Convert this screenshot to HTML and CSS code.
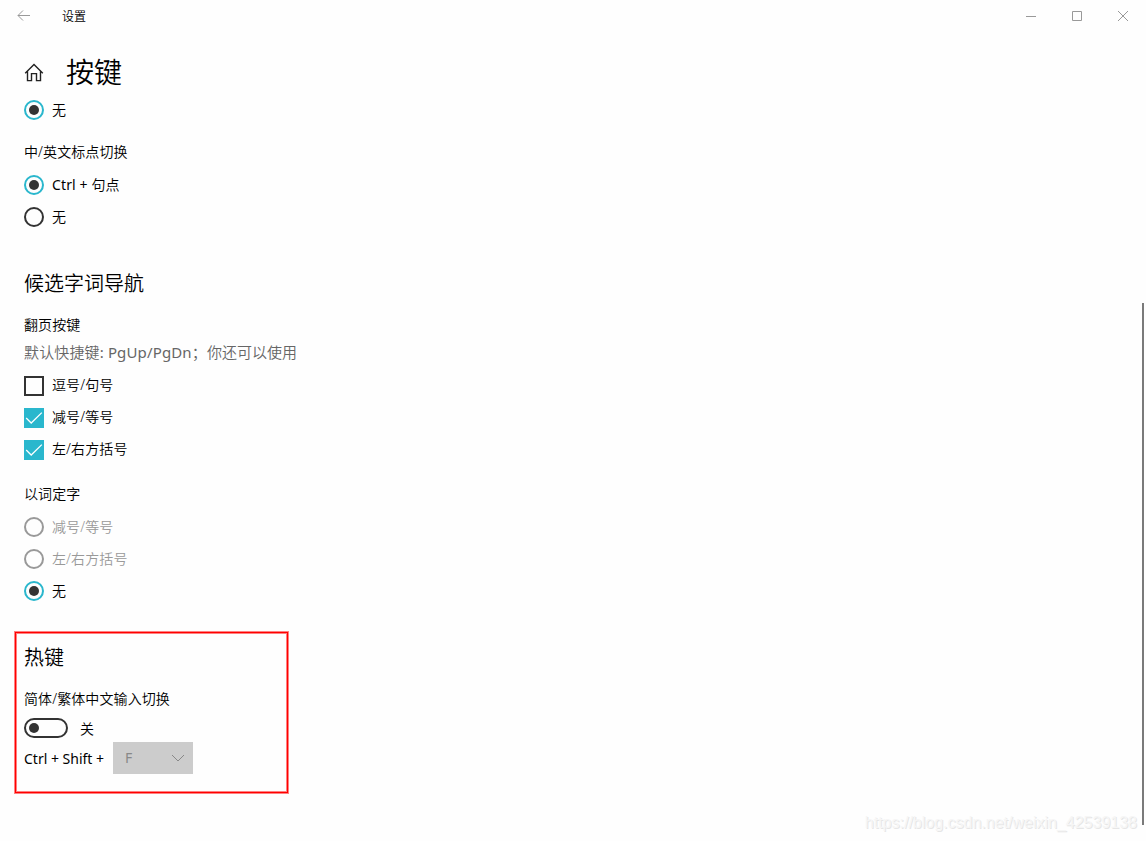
FILE: index.html
```html
<!DOCTYPE html>
<html lang="zh-CN">
<head>
  <meta charset="UTF-8">
  <title>设置</title>
  <link rel="stylesheet" href="styles.css">
</head>
<body>

  <div class="titlebar">
    <svg class="back" width="14" height="12" viewBox="0 0 14 12"><path d="M13 5.500H1M6 .5l-5 5 5 5"/></svg>
    <span class="app-name">设置</span>
    <div class="window-buttons">
      <svg width="46" height="32" viewBox="0 0 46 32"><path d="M18 16.5h10"/></svg>
      <svg width="46" height="32" viewBox="0 0 46 32"><path d="M18.5 11.5h9v9h-9z"/></svg>
      <svg width="46" height="32" viewBox="0 0 46 32"><path d="M18 11l10 10M28 11L18 21"/></svg>
    </div>
  </div>

  <div class="content">
    <div class="page-title">
      <svg class="home" width="20" height="20" viewBox="0 0 20 20"><path d="M1.200 11.200L10 2.500l8.800 8.700M3.500 9.500v9.100h4v-7h5v7h4V9.500"/></svg>
      <h1>按键</h1>
    </div>

    <div class="option"><span class="radio checked"></span><span class="text">无</span></div>

    <h3 class="punctuation">中/英文标点切换</h3>
    <div class="option"><span class="radio checked"></span><span class="text"><span class="latin">Ctrl + </span>句点</span></div>
    <div class="option"><span class="radio"></span><span class="text">无</span></div>

    <h2 class="navigation">候选字词导航</h2>
    <h3>翻页按键</h3>
    <p class="hint"><span class="default-keys">默认快捷键<span class="latin">: PgUp/PgDn</span>；</span><span>你还可以使用</span></p>
    <div class="checks">
      <div class="option"><span class="checkbox"></span><span class="text">逗号/句号</span></div>
      <div class="option">
        <span class="checkbox checked"><svg width="20" height="20" viewBox="0 0 20 20"><path d="M2.200 10l5 5L17.800 4.600"/></svg></span>
        <span class="text">减号/等号</span>
      </div>
      <div class="option">
        <span class="checkbox checked"><svg width="20" height="20" viewBox="0 0 20 20"><path d="M2.200 10l5 5L17.800 4.600"/></svg></span>
        <span class="text">左/右方括号</span>
      </div>
    </div>

    <h3 class="word-pick">以词定字</h3>
    <div class="option disabled"><span class="radio"></span><span class="text">减号/等号</span></div>
    <div class="option disabled"><span class="radio"></span><span class="text">左/右方括号</span></div>
    <div class="option"><span class="radio checked"></span><span class="text">无</span></div>

    <div class="hotkeys">
      <h2>热键</h2>
      <h3>简体/繁体中文输入切换</h3>
      <div class="toggle-row"><span class="toggle"></span><span class="state">关</span></div>
      <div class="shortcut latin">
        <span class="keys">Ctrl + Shift +</span>
        <div class="select">
          <span>F</span>
          <svg width="14" height="8" viewBox="0 0 14 8"><path d="M1 1l6 6 6-6"/></svg>
        </div>
      </div>
    </div>
  </div>

  <div class="scrollbar"></div>
  <div class="watermark">https://blog.csdn.net/weixin_42539138</div>

</body>
</html>
```

FILE: styles.css
```css
* { box-sizing: border-box; }
body {
  margin: 0;
  height: 841px;
  position: relative;
  overflow: hidden;
  background: #fefefe;
  color: #000;
  font: 350 14px/20px "Noto Sans", "Noto Sans CJK SC", sans-serif;
}
svg { display: block; fill: none; }
h1, h2, h3, p { margin: 0; font-weight: 350; }
.latin { font-weight: 400; }

.titlebar {
  display: flex;
  align-items: center;
  height: 32px;
  padding-left: 17px;
}
.back { stroke: #999; }
.app-name { margin-left: 31px; padding-top: 2px; font-size: 12px; }
.window-buttons { display: flex; margin-left: auto; }
.window-buttons svg { stroke: #999; }

.content { padding-left: 24px; }
.page-title {
  display: flex;
  align-items: center;
  height: 62px;
  padding-top: 18px;
}
.home { stroke: #222; stroke-width: 1.4; }
h1 { margin-left: 22px; font-size: 28px; line-height: 44px; }
h2 { padding-top: 2px; font-size: 20px; line-height: 38px; }
h3 { font-size: 14px; line-height: 32px; letter-spacing: 0.1px; }
.punctuation { margin: 10px 0 1px; }
.navigation { margin: 30px 0 6px; }
.word-pick { margin: 12px 0 1px; }
.hint {
  display: flex;
  height: 24px;
  color: #666;
  font-size: 15px;
  line-height: 22px;
}
.default-keys { width: 183px; letter-spacing: 0.14px; }
.checks { margin-top: 5px; }

.option {
  display: flex;
  align-items: center;
  gap: 8px;
  height: 32px;
}
.text { letter-spacing: 0.12px; }
.radio {
  display: flex;
  width: 20px;
  height: 20px;
  border: 2px solid #333;
  border-radius: 50%;
}
.radio.checked { border-color: #2ab7cd; }
.radio.checked::before {
  content: "";
  width: 10px;
  height: 10px;
  margin: auto;
  border-radius: 50%;
  background: #333;
}
.disabled { color: #999; }
.disabled .radio { border-color: #999; }
.checkbox { width: 20px; height: 20px; border: 2px solid #333; }
.checkbox.checked { border: 0; background: #2ab7cd; }
.checkbox svg { stroke: #fff; stroke-width: 1.3; }
.checks .text { margin-bottom: 2px; }

.hotkeys {
  width: 273px;
  height: 161px;
  margin: 25px 0 0 -9px;
  padding: 4px 8px;
  border: 1px solid #f00;
  box-shadow: 0 0 0 1px #ff8080, inset 0 0 0 1px #ff8080;
}
.hotkeys h2 { margin-bottom: 6px; }
.toggle-row {
  display: flex;
  align-items: center;
  gap: 12px;
  height: 20px;
  margin: 3px 0 4px;
}
.toggle {
  display: flex;
  align-items: center;
  width: 44px;
  height: 20px;
  padding-left: 3px;
  border: 2px solid #333;
  border-radius: 10px;
}
.toggle::before {
  content: "";
  width: 10px;
  height: 10px;
  border-radius: 50%;
  background: #333;
}
.state { padding-top: 2px; }
.shortcut { display: flex; align-items: center; }
.keys { width: 89px; padding-top: 2px; white-space: nowrap; }
.select {
  display: flex;
  align-items: center;
  justify-content: space-between;
  width: 80px;
  height: 32px;
  padding: 0 8px 0 12px;
  background: #ccc;
  color: #888;
}
.select svg { stroke: #888; }

.scrollbar {
  position: absolute;
  top: 303px;
  right: 2px;
  width: 2px;
  height: 522px;
  background: #7a7a7a;
}
.watermark {
  position: absolute;
  right: 9px;
  bottom: 8px;
  color: #f6f6f6;
  font: 16px/20px "Liberation Sans", sans-serif;
  text-shadow: 1px 1px 0 #e6e6e6;
}
```
